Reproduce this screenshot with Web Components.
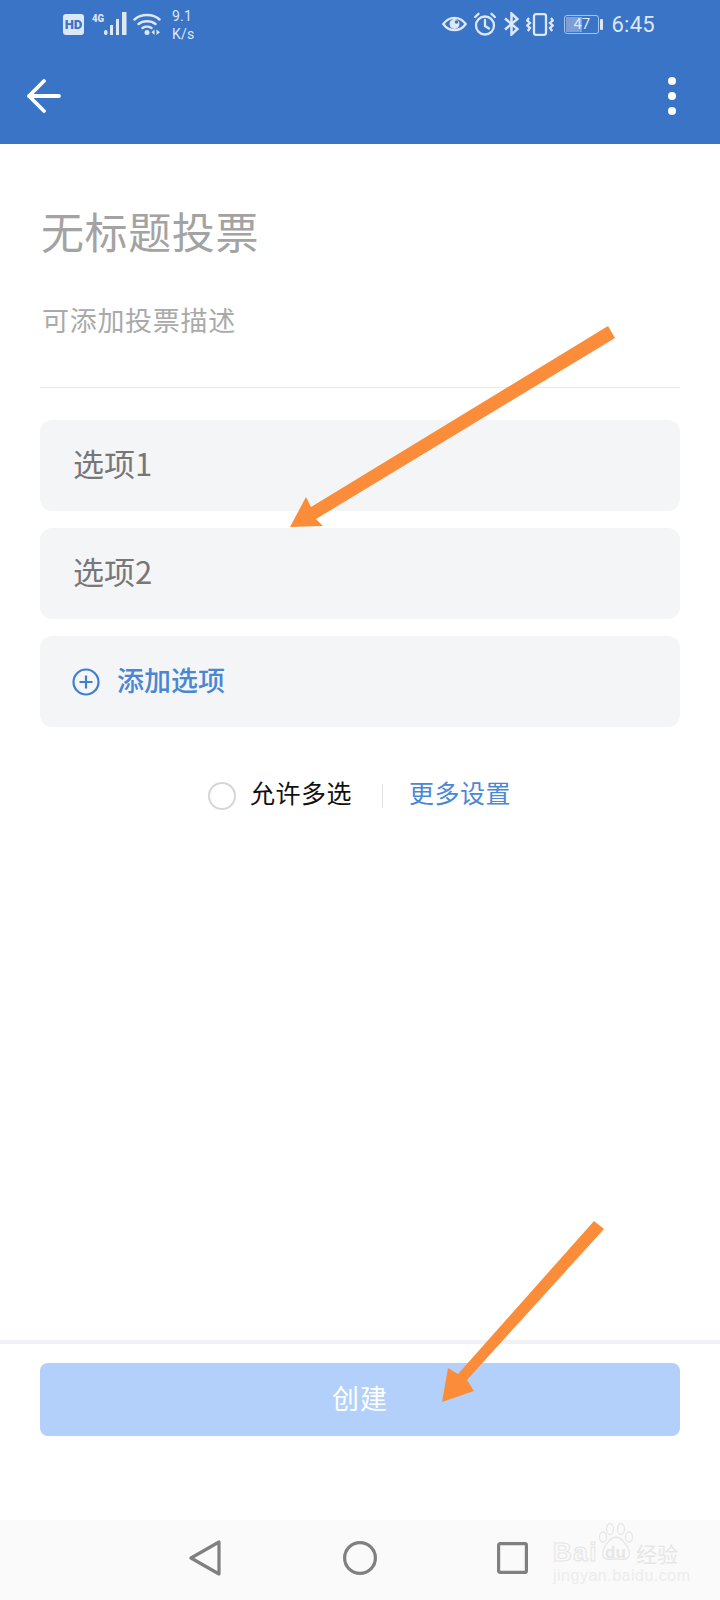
<!DOCTYPE html>
<html lang="zh">
<head>
<meta charset="utf-8">
<title>投票</title>
<style>
  html, body { margin: 0; padding: 0; background: #fff; }
  body { font-family: "Noto Sans CJK SC", "Noto Sans", sans-serif; }
</style>
</head>
<body>
<vote-page>
  <status-bar slot="top"></status-bar>
  <app-bar slot="top"></app-bar>
  <vote-form>
    <vote-option>选项1</vote-option>
    <vote-option>选项2</vote-option>
    <add-option>添加选项</add-option>
  </vote-form>
  <create-footer slot="bottom">创建</create-footer>
  <nav-bar slot="bottom"></nav-bar>
  <note-arrows slot="over"></note-arrows>
</vote-page>

<script>
function define(name, css, html) {
  customElements.define(name, class extends HTMLElement {
    constructor() {
      super();
      this.attachShadow({ mode: 'open' }).innerHTML = `<style>${css}</style>${html}`;
    }
  });
}

define('vote-page', `
  :host { display: flex; flex-direction: column; position: relative; width: 720px; height: 1600px; overflow: hidden; background: #fff; }
  .top { background: #3974c6; }
  .main { flex: 1; }
`, `
  <div class="top"><slot name="top"></slot></div>
  <div class="main"><slot></slot></div>
  <slot name="bottom"></slot>
  <slot name="over"></slot>
`);

define('status-bar', `
  :host { display: flex; align-items: center; height: 48px; padding: 0 65px 0 63px; color: #dde7f6; font-family: Roboto, sans-serif; }
  svg { display: block; flex: none; }
  .speed { margin-left: 11px; font-size: 14px; line-height: 18px; width: 26px; padding-top: 1px; letter-spacing: 0.2px; }
  .spacer { flex: 1; }
  .batt { position: relative; display: flex; align-items: center; justify-content: center; width: 35px; height: 19px; box-sizing: border-box; margin-left: 10px; border: 1px solid #a9c3e8; border-radius: 3px; font-size: 15px; line-height: 17px; overflow: hidden; }
  .batt::before { content: ""; position: absolute; left: 1px; top: 1px; bottom: 1px; width: 47%; background: #7e9fd6; }
  .batt span { position: relative; }
  .nub { width: 3px; height: 11px; margin-left: 1px; border-radius: 1px; background: #dde7f6; }
  .time { margin-left: 8px; font-size: 22px; letter-spacing: 0.3px; }
`, `
  <svg width="21" height="21" viewBox="0 0 21 21"><rect width="21" height="21" rx="3" fill="#dde7f6"/><text x="10.5" y="15.300" font-family="Roboto, sans-serif" font-size="13" font-weight="900" text-anchor="middle" fill="#3974c6">HD</text></svg>
  <svg width="36" height="24" viewBox="0 0 36 24" style="margin-left:8px">
    <text x="0" y="10" font-family="Roboto, sans-serif" font-size="11" font-weight="900" fill="#dde7f6" textLength="12" lengthAdjust="spacingAndGlyphs">4G</text>
    <g fill="#dde7f6"><rect x="12" y="18" width="3.500" height="5" rx="1.700"/><rect x="18" y="13" width="3" height="10"/><rect x="24" y="7" width="3" height="16"/><rect x="30" y="0" width="4.500" height="23"/></g>
  </svg>
  <svg width="28" height="24" viewBox="0 0 28 24" style="margin-left:5px" fill="none" stroke="#dde7f6" stroke-width="2.500" stroke-linecap="round">
    <path d="M1.500 7.500C8 1.500 20 1.500 26.500 7.500"/><path d="M5.500 12C10 8.300 18 8.300 22.500 12"/><path d="M9.500 16C12 14.300 16 14.300 18.500 16"/>
    <circle cx="14" cy="20.500" r="2.500" fill="#dde7f6" stroke="none"/>
    <path d="M21.500 17.500v5.500l-3-2.700zM23.500 17.500v5.500l3.500-2.700z" fill="#dde7f6" stroke="none"/>
  </svg>
  <div class="speed">9.1<br>K/s</div>
  <div class="spacer"></div>
  <svg width="25" height="18" viewBox="0 0 25 18" fill="none" stroke="#dde7f6" stroke-width="2.300"><path d="M1.300 9C7 .800 18 .800 23.700 9C18 17.200 7 17.200 1.300 9Z"/><circle cx="12.500" cy="9" r="5" fill="#dde7f6" stroke="none"/><circle cx="14.500" cy="7" r="1.800" fill="#3974c6" stroke="none"/></svg>
  <svg width="22" height="24" viewBox="0 0 22 24" style="margin-left:7px" fill="none" stroke="#dde7f6" stroke-width="2.300" stroke-linecap="round"><circle cx="11" cy="13.500" r="9"/><path d="M11 8v6l4 2.500M1.200 5L4.500 1.800M20.800 5L17.500 1.800"/></svg>
  <svg width="15" height="24" viewBox="0 0 15 24" style="margin-left:8px" fill="none" stroke="#dde7f6" stroke-width="2.500"><path d="M1 6.500L13.500 17L7.500 22.500V1.500L13.500 7L1 17.500"/></svg>
  <svg width="28" height="23" viewBox="0 0 28 23" style="margin-left:7px" fill="none" stroke="#dde7f6" stroke-width="2.300"><rect x="8" y="1.200" width="12" height="20.600" rx="2"/><path d="M3 5L1.200 7.500L4 10L1.200 12.500L4 15L1.800 18M25 5L26.800 7.500L24 10L26.800 12.500L24 15L26.200 18"/></svg>
  <div class="batt"><span>47</span></div><div class="nub"></div>
  <div class="time">6:45</div>
`);

define('app-bar', `
  :host { display: flex; align-items: center; justify-content: space-between; height: 96px; padding: 0 44px 0 27px; }
  svg { display: block; }
`, `
  <svg width="34" height="34" viewBox="0 0 34 34" fill="none" stroke="#fff" stroke-width="3.800" stroke-linecap="round" stroke-linejoin="round"><path d="M32 17H2M17 2L2 17L17 32"/></svg>
  <svg width="8" height="38" viewBox="0 0 8 38" fill="#fff"><circle cx="4" cy="4" r="4"/><circle cx="4" cy="19" r="4"/><circle cx="4" cy="34" r="4"/></svg>
`);

define('vote-form', `
  :host { display: block; padding: 56px 40px 0; }
  .title { padding-left: 1px; font-size: 43px; line-height: 60px; color: #a3a3a3; letter-spacing: 0.6px; }
  .desc { margin-top: 40px; padding-left: 2px; font-size: 27px; line-height: 40px; color: #aaa; letter-spacing: 0.7px; }
  .rule { height: 1px; margin-top: 47px; background: #e8e8e8; }
  .list { display: grid; gap: 17px; margin-top: 32px; }
  .opts { display: flex; align-items: center; justify-content: center; height: 40px; margin-top: 49px; padding-right: 1px; font-size: 25px; letter-spacing: 0.5px; }
  .radio { width: 24px; height: 24px; border: 2px solid #d6d6d6; border-radius: 50%; margin-right: 14px; }
  .multi, .more { padding-bottom: 7px; line-height: 33px; }
  .multi { color: #111; }
  .sep { width: 1px; height: 24px; margin: 0 26px 0 30px; background: #e2e2e2; }
  .more { color: #4a88d5; }
`, `
  <div class="title">无标题投票</div>
  <div class="desc">可添加投票描述</div>
  <div class="rule"></div>
  <div class="list"><slot></slot></div>
  <div class="opts">
    <span class="radio"></span><span class="multi">允许多选</span>
    <span class="sep"></span><span class="more">更多设置</span>
  </div>
`);

define('vote-option', `
  :host { display: flex; align-items: center; box-sizing: border-box; height: 91px; padding: 0 0 6px 33px; border-radius: 12px; background: #f4f5f7; color: #777; font-size: 31px; }
`, `<slot></slot>`);

define('add-option', `
  :host { display: flex; align-items: center; gap: 17px; height: 91px; padding-left: 32px; border-radius: 12px; background: #f4f5f7; color: #4a86d4; font-size: 27px; font-weight: 500; }
  svg { display: block; }
  span { padding-bottom: 4px; }
`, `
  <svg width="28" height="28" viewBox="0 0 28 28" fill="none" stroke="#3f7fd0" stroke-width="2.200"><circle cx="14" cy="14" r="12.500"/><path d="M14 7.500v13M7.500 14h13"/></svg>
  <span><slot></slot></span>
`);

define('create-footer', `
  :host { display: block; padding: 19px 40px 84px; border-top: 4px solid #eff1f5; }
  .btn { display: flex; align-items: center; justify-content: center; box-sizing: border-box; height: 73px; padding-bottom: 4px; border-radius: 8px; background: #b3d0fa; color: #fff; font-size: 27px; letter-spacing: 1px; }
`, `<div class="btn"><slot></slot></div>`);

define('nav-bar', `
  :host { display: block; position: relative; height: 80px; background: #fafafa; }
  .keys { display: flex; align-items: center; height: 76px; padding-left: 189px; }
  svg { display: block; flex: none; }
  .mark { position: absolute; left: 553px; top: 0; width: 130px; height: 80px; color: #e9e9e9; font-family: "Liberation Sans", sans-serif; }
  .paw { position: absolute; left: 45px; top: 3px; }
  .logo { position: absolute; left: 0; top: 18px; font-size: 26px; font-weight: 700; line-height: 28px; letter-spacing: 1.5px; white-space: nowrap; color: #fafafa; -webkit-text-stroke: 1px #e6e6e6; }
  .du { position: absolute; left: 52px; top: 24px; font-size: 17px; font-weight: 700; line-height: 18px; color: #e6e6e6; }
  .cn { position: absolute; left: 83px; top: 20px; font-family: "Noto Sans CJK SC", sans-serif; font-size: 21px; line-height: 26px; white-space: nowrap; color: #e6e6e6; }
  .url { position: absolute; left: 0; top: 47px; font-size: 16px; line-height: 18px; white-space: nowrap; letter-spacing: 0.5px; color: #ececec; }
`, `
  <div class="keys">
    <svg width="32" height="36" viewBox="0 0 32 36" fill="none" stroke="#808080" stroke-width="3.200" stroke-linejoin="round"><path d="M30 2V34L2 18Z"/></svg>
    <svg width="34" height="34" viewBox="0 0 34 34" fill="none" stroke="#808080" stroke-width="3.200" style="margin-left:122px"><circle cx="17" cy="17" r="15.400"/></svg>
    <svg width="31" height="32" viewBox="0 0 31 32" fill="none" stroke="#808080" stroke-width="3.200" style="margin-left:120px"><rect x="1.600" y="1.600" width="27.800" height="28.800" rx="1.500"/></svg>
  </div>
  <div class="mark">
    <svg class="paw" width="36" height="38" viewBox="0 0 36 38" fill="#fafafa" stroke="#e6e6e6" stroke-width="1.300"><ellipse cx="5" cy="14" rx="3.500" ry="5"/><ellipse cx="12" cy="6" rx="3.500" ry="5.500"/><ellipse cx="23" cy="6" rx="3.500" ry="5.500"/><ellipse cx="31" cy="14" rx="3.500" ry="5"/><path d="M18 14C12 14 3 26 5 33C7 38 14 36 18 36C22 36 29 38 31 33C33 26 24 14 18 14Z"/></svg>
    <div class="logo">Bai</div>
    <div class="du">du</div>
    <div class="cn">经验</div>
    <div class="url">jingyan.baidu.com</div>
  </div>
`);

define('note-arrows', `
  :host { display: block; position: absolute; inset: 0; pointer-events: none; }
  svg { display: block; }
`, `
  <svg width="720" height="1600" viewBox="0 0 720 1600" fill="#fb8d3a">
    <path d="M608 326L615 338L316 519L323 526L290 527L306 497L311 507Z"/>
    <path d="M594 1221L604 1229L467 1380L474 1391L442 1402L448 1368L458 1374Z"/>
  </svg>
`);
</script>
</body>
</html>
